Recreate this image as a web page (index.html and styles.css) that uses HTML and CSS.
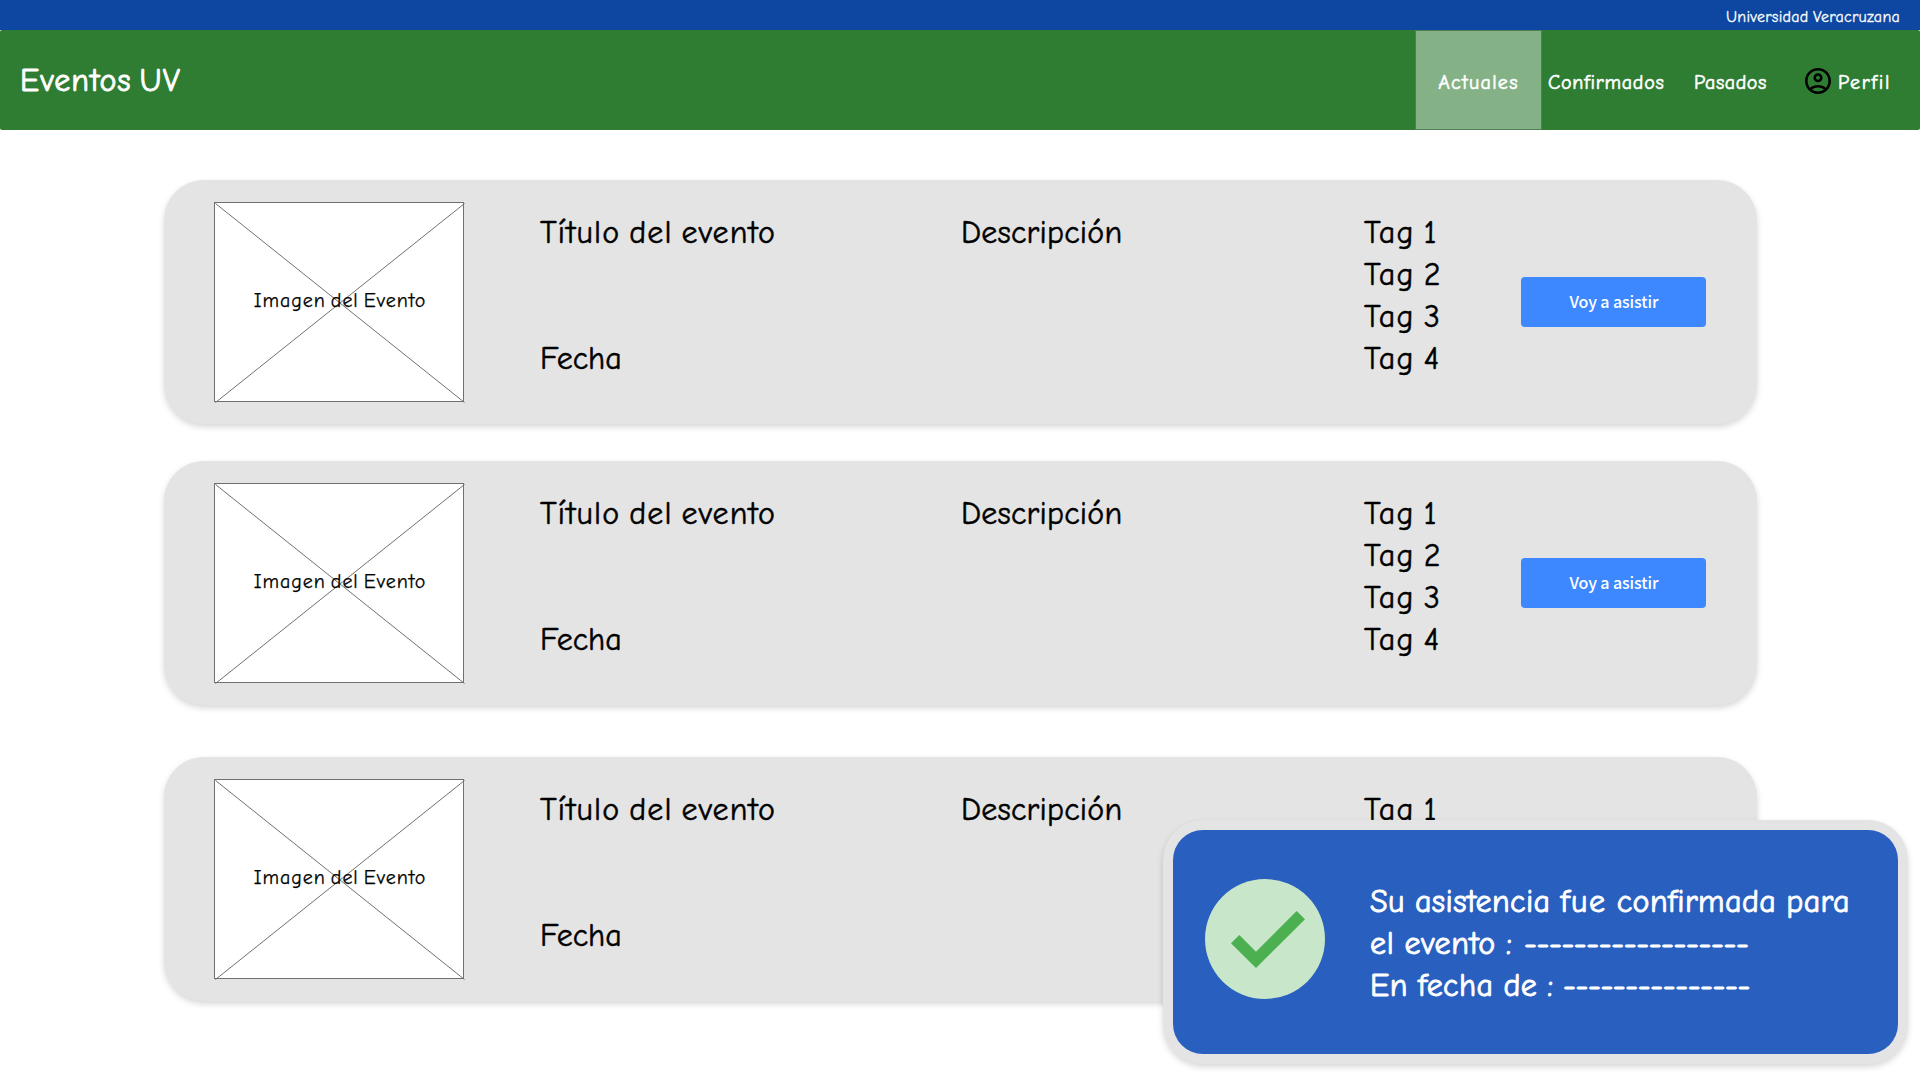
FILE: index.html
```html
<!DOCTYPE html>
<html lang="es">
<head>
<meta charset="utf-8">
<title>Eventos UV</title>
<link rel="stylesheet" href="styles.css">
</head>
<body>
<header>
  <div class="topbar"><span class="university">Universidad Veracruzana</span></div>
  <div class="navbar">
    <h1 class="brand">Eventos UV</h1>
    <nav class="nav">
      <a class="nav-item active"><span class="t-actuales">Actuales</span></a>
      <a class="nav-item nav-confirmed"><span class="t-confirmados">Confirmados</span></a>
      <a class="nav-item nav-past"><span class="t-pasados">Pasados</span></a>
      <a class="nav-item nav-profile">
        <svg class="profile-icon" viewBox="2 2 20 20"><path d="M12 2C6.48 2 2 6.48 2 12s4.48 10 10 10 10-4.48 10-10S17.52 2 12 2zM7.35 18.5C8.66 17.56 10.26 17 12 17s3.34.56 4.65 1.5C15.34 19.44 13.74 20 12 20s-3.34-.56-4.65-1.5zm10.79-1.38C16.45 15.8 14.32 15 12 15s-4.45.8-6.14 2.12C4.7 15.73 4 13.95 4 12c0-4.42 3.58-8 8-8s8 3.58 8 8c0 1.95-.7 3.73-1.86 5.12zM12 6c-1.93 0-3.5 1.57-3.5 3.5S10.07 13 12 13s3.5-1.57 3.5-3.5S13.93 6 12 6zm0 5c-.83 0-1.5-.67-1.5-1.5S11.17 8 12 8s1.5.67 1.5 1.5S12.83 11 12 11z"/></svg>
        <span class="t-perfil">Perfil</span>
      </a>
    </nav>
  </div>
</header>

<main class="events">
  <article class="card">
    <div class="picture">
      <svg class="cross" viewBox="0 0 250 200"><path d="M0.5 0.5L249.5 199.5M249.5 0.5L0.5 199.5"/></svg>
      <span class="caption">Imagen del Evento</span>
    </div>
    <div class="summary"><h2 class="event-title">Título del evento</h2><p class="date">Fecha</p></div>
    <p class="description">Descripción</p>
    <ul class="tags"><li>Tag 1</li><li>Tag 2</li><li>Tag 3</li><li>Tag 4</li></ul>
    <button class="attend">Voy a asistir</button>
  </article>
  <article class="card">
    <div class="picture">
      <svg class="cross" viewBox="0 0 250 200"><path d="M0.5 0.5L249.5 199.5M249.5 0.5L0.5 199.5"/></svg>
      <span class="caption">Imagen del Evento</span>
    </div>
    <div class="summary"><h2 class="event-title">Título del evento</h2><p class="date">Fecha</p></div>
    <p class="description">Descripción</p>
    <ul class="tags"><li>Tag 1</li><li>Tag 2</li><li>Tag 3</li><li>Tag 4</li></ul>
    <button class="attend">Voy a asistir</button>
  </article>
  <article class="card card-last">
    <div class="picture">
      <svg class="cross" viewBox="0 0 250 200"><path d="M0.5 0.5L249.5 199.5M249.5 0.5L0.5 199.5"/></svg>
      <span class="caption">Imagen del Evento</span>
    </div>
    <div class="summary"><h2 class="event-title">Título del evento</h2><p class="date">Fecha</p></div>
    <p class="description">Descripción</p>
    <ul class="tags"><li>Tag 1</li></ul>
  </article>
</main>

<aside class="toast">
  <div class="toast-body">
    <svg class="check" viewBox="0 0 360 360"><circle cx="180" cy="180" r="180" fill="#c8e6c9"/><path d="M78 193L103 168L153 218L275 96L300 121L153 267Z" fill="#4caf50"/></svg>
    <div class="message">
      <p class="line-1">Su asistencia <span class="verb">fue</span> confirmada para</p>
      <p><span class="line-2">el evento :</span><span class="dashes">------------------</span></p>
      <p><span class="line-3">En fecha de :</span><span class="dashes">---------------</span></p>
    </div>
  </div>
</aside>
</body>
</html>
```
FILE: styles.css
```css
* { box-sizing: border-box; margin: 0; padding: 0; }
body {
  width: 1920px;
  height: 1080px;
  overflow: hidden;
  background: #fff;
  color: #000;
  font-family: "Comic Neue", Lato, sans-serif;
  font-size: 32px;
  line-height: 42px;
  -webkit-text-stroke: 0.5px currentColor;
}
h1, h2 { font-size: inherit; font-weight: 400; }
span, p, h1, h2, li { white-space: nowrap; }

.topbar {
  height: 30px;
  background: #0d47a1;
  color: #fff;
  display: flex;
  justify-content: flex-end;
  padding: 7px 19px 0 0;
  font-size: 16px;
  line-height: 21px;
  -webkit-text-stroke-width: 0.3px;
}
.university { width: 175px; letter-spacing: 0.25px; word-spacing: -1px; }

.navbar {
  height: 100px;
  background: #2e7d32;
  border-radius: 2px;
  color: #fff;
  display: flex;
  align-items: center;
  justify-content: space-between;
  -webkit-text-stroke-width: 0.9px;
}
.brand { padding: 2px 0 0 20px; letter-spacing: 1.1px; word-spacing: -4px; }
.nav {
  display: flex;
  height: 100px;
  font-size: 20px;
  line-height: 26px;
  -webkit-text-stroke-width: 0.6px;
}
.nav-item { display: flex; align-items: center; padding-top: 5px; }
.active {
  width: 127px;
  justify-content: center;
  background: #84b185;
  border: 1px solid #4f7f52;
}
.nav-confirmed { width: 145px; padding-left: 6px; }
.nav-past { width: 118px; padding-left: 7px; }
.nav-profile { width: 115px; }
.profile-icon { width: 26px; height: 26px; margin: -4px 7px 0 0; }
.t-actuales { letter-spacing: 1.3px; }
.t-confirmados { letter-spacing: 0.75px; }
.t-pasados { letter-spacing: 0.6px; }
.t-perfil { letter-spacing: 1.7px; }

.events { padding: 50px 163px 0 164px; display: flex; flex-direction: column; gap: 37px; }
.card {
  height: 244px;
  border-radius: 40px;
  background: #e4e4e4;
  box-shadow: 0 3px 6px rgba(0, 0, 0, 0.16);
  padding: 22px 51px 0 50px;
  display: flex;
}
.card-last { margin-top: 15px; }
.picture { width: 250px; height: 200px; display: grid; place-items: center; background: #fff; border: 1px solid #707070; }
.picture > * { grid-area: 1 / 1; }
.cross { width: 250px; height: 200px; fill: none; stroke: #707070; }
.caption {
  z-index: 1;
  font-size: 20px;
  line-height: 26px;
  margin-top: -4px;
  letter-spacing: 0.95px;
  word-spacing: -2.5px;
  -webkit-text-stroke-width: 0.25px;
}
.summary { width: 421px; padding: 10px 0 0 76px; }
.event-title { letter-spacing: 1.15px; word-spacing: -3px; }
.date { margin-top: 84px; }
.description { width: 452px; padding: 10px 0 0 76px; letter-spacing: 0.2px; }
.tags { width: 184px; padding: 10px 0 0 27px; list-style: none; letter-spacing: 1.1px; word-spacing: -2.5px; }
.attend {
  width: 185px;
  height: 50px;
  margin-top: 75px;
  padding: 0 0 2px 1px;
  border: 0;
  border-radius: 4px;
  background: #3d87ff;
  color: #fff;
  font: 500 16px/24px "Noto Sans CJK SC", "Noto Sans", sans-serif;
  letter-spacing: -0.1px;
  -webkit-text-stroke-width: 0;
}

.toast {
  position: absolute;
  left: 1163px;
  top: 820px;
  width: 745px;
  height: 244px;
  padding: 10px;
  border-radius: 40px;
  background: #e4e4e4;
  box-shadow: 0 3px 6px rgba(0, 0, 0, 0.16);
}
.toast-body {
  height: 224px;
  border-radius: 30px;
  background: #295fbf;
  color: #fff;
  display: flex;
  padding: 49px 0 0 32px;
  -webkit-text-stroke-width: 0.9px;
}
.check { width: 120px; height: 120px; }
.message { padding: 2px 0 0 45px; }
.line-1 { letter-spacing: 0.4px; word-spacing: -1px; }
.verb { letter-spacing: 1.6px; }
.line-2 { display: inline-block; width: 154px; letter-spacing: 0.6px; word-spacing: -1px; }
.line-3 { display: inline-block; width: 193px; letter-spacing: 0.4px; word-spacing: -1px; }
.dashes { letter-spacing: -0.4px; }
```
